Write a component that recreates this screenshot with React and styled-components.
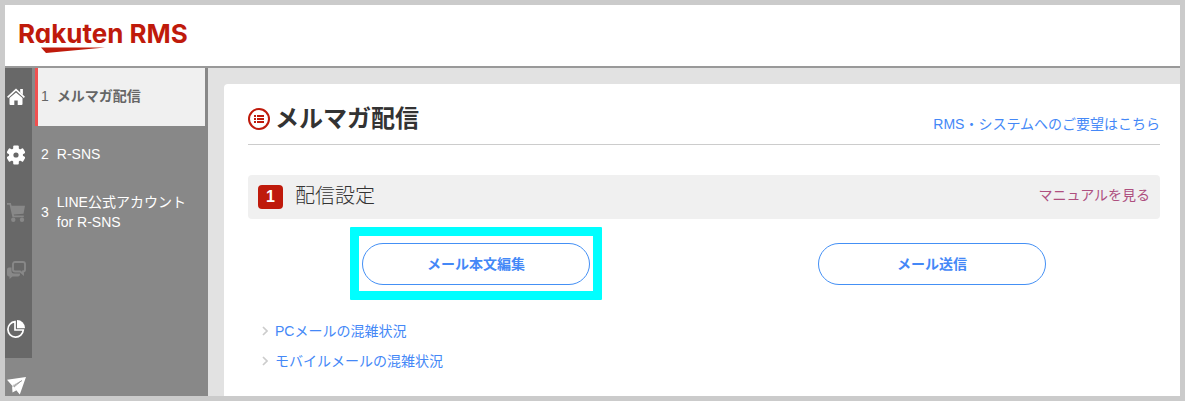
import styled, { createGlobalStyle, css } from 'styled-components';

const GlobalStyle = createGlobalStyle`
  *, *::before, *::after {
    box-sizing: border-box;
  }

  body {
    margin: 0;
    font-family: "Liberation Sans", "Noto Sans CJK JP", sans-serif;
    font-size: 14px;
    line-height: 20px;
    color: #333;
  }

  a {
    color: #4488f7;
    text-decoration: none;
  }
`;

const Frame = styled.div`
  display: flex;
  flex-direction: column;
  height: 100vh;
  border: 5px solid #cbcbcb;
  background: #e2e2e2;
  overflow: hidden;
`;

const Header = styled.header`
  flex: none;
  height: 63px;
  padding: 15px 13px 0;
  background: #fff;
  border-bottom: 2px solid #999;
`;

const Logo = styled.a`
  display: flex;
  flex-direction: column;
  width: max-content;
  color: #bf1a0b;

  svg {
    display: block;
    margin-left: 23px;
  }
`;

const LogoText = styled.span`
  font-family: Inter, sans-serif;
  font-size: 26px;
  font-weight: 700;
  line-height: 27px;
  font-feature-settings: "cv11";
`;

const Body = styled.div`
  display: flex;
  flex: 1;
  min-height: 0;
`;

const Rail = styled.nav`
  flex: none;
  width: 27px;
  background: #888;
`;

const RailButton = styled.button`
  display: flex;
  align-items: center;
  width: 100%;
  height: 58px;
  padding: 0 2px;
  border: 0;
  background: ${({ $plain }) => ($plain ? 'transparent' : '#686868')};
  color: ${({ $muted }) => ($muted ? '#888' : '#fff')};

  svg {
    flex: none;
    display: block;
  }
`;

const SideMenu = styled.nav`
  flex: none;
  width: 176px;
  padding: 0 3px;
  background: #888;
`;

const SideItem = styled.a`
  display: flex;
  align-items: center;
  gap: 8px;
  height: 58px;
  padding: 0 0 2px 3px;
  border-left: 3px solid transparent;
  color: #fff;

  ${({ $active }) =>
    $active &&
    css`
      border-left-color: #f05050;
      background: #f0f0f0;
      color: #666;

      span:last-child {
        font-weight: 700;
      }
    `}
`;

const Main = styled.main`
  flex: 1;
  display: flex;
  min-width: 0;
  padding: 16px 0 0 16px;
`;

const Panel = styled.div`
  flex: 1;
  padding: 16px 20px 0 24px;
  border-top-left-radius: 4px;
  background: #fff;
`;

const TitleRow = styled.div`
  display: flex;
  align-items: center;
  justify-content: space-between;
  height: 45px;
  border-bottom: 1px solid #ccc;
`;

const Title = styled.h1`
  display: flex;
  align-items: center;
  gap: 5px;
  margin: 0 0 6px;
  font-size: 24px;
  font-weight: 700;
  line-height: 36px;
`;

const RequestLink = styled.a`
  padding-top: 4px;
`;

const SectionBar = styled.div`
  display: flex;
  align-items: center;
  height: 44px;
  margin-top: 30px;
  padding: 0 10px;
  border-radius: 4px;
  background: #f0f0f0;
`;

const StepBadge = styled.span`
  width: 25px;
  height: 24px;
  border-radius: 4px;
  background: #bf1a0b;
  color: #fff;
  font-size: 16px;
  font-weight: 700;
  line-height: 24px;
  text-align: center;
`;

const SectionTitle = styled.h2`
  flex: 1;
  margin: 0 0 2px 12px;
  font-size: 20px;
  font-weight: 300;
  line-height: 40px;
`;

const ManualLink = styled.a`
  padding-bottom: 4px;
  color: #ae4f7f;
`;

const Actions = styled.div`
  display: grid;
  grid-template-columns: 1fr 1fr;
  padding-top: 24px;
`;

const PillButton = styled.button`
  justify-self: center;
  width: 50%;
  height: 42px;
  border: 1px solid #4490f5;
  border-radius: 21px;
  background: #fff;
  color: #4488f7;
  font: inherit;
  font-weight: 700;
`;

/* square-cornered marker drawn around a button */
const Marker = styled.div`
  justify-self: center;
  display: grid;
  width: calc(50% + 24px);
  margin: -16px 0 -15px;
  padding: 7px 3px 6px;
  border: 9px solid #00ffff;
  border-radius: 1px;

  ${PillButton} {
    width: 100%;
  }
`;

const LinkList = styled.ul`
  margin: 31px 0 0;
  padding: 0 0 0 14px;
  list-style: none;
`;

const LinkItem = styled.li`
  display: flex;
  align-items: center;
  gap: 7px;
  height: 30px;
`;

const HomeIcon = () => (
  <svg width="18" height="19" viewBox="0 0 18 19" fill="currentColor" aria-hidden="true">
    <path d="M9 4.500 2.500 10V16a1 1 0 0 0 1 1H7.300v-4.400h3.400V17h3.800a1 1 0 0 0 1-1V10Z" />
    <path d="M.6 9.300 9 1.600l8.400 7.700" fill="none" stroke="currentColor" strokeWidth="1.700" />
    <path d="M13.200 1h2.700V7l-2.700-2.400Z" />
  </svg>
);

const GearIcon = () => (
  <svg width="18" height="20" viewBox="0 0 18 20" aria-hidden="true">
    <g fill="currentColor">
      <circle cx="9" cy="10" r="7" />
      {[0, 60, 120].map((angle) => (
        <rect key={angle} x="6.200" y=".6" width="5.600" height="18.800" rx="1" transform={`rotate(${angle} 9 10)`} />
      ))}
    </g>
    <circle cx="9" cy="10" r="2.600" fill="#686868" />
  </svg>
);

const CartIcon = () => (
  <svg width="18" height="20" viewBox="0 0 18 20" fill="currentColor" aria-hidden="true">
    <path d="M0 0h3.800l.8 2.800H18l-1.500 8-9.700.8.3.9h9.700v1.700H5.500L2.600 1.700H0Z" />
    <circle cx="6.300" cy="16.700" r="2.200" />
    <circle cx="15" cy="16.700" r="2.200" />
  </svg>
);

const ChatIcon = () => (
  <svg width="19" height="20" viewBox="0 0 19 20" aria-hidden="true">
    <path d="M4.500 6.500H2a2 2 0 0 0-2 2v5a2 2 0 0 0 2 2h.5V18l3-2.500H11a2 2 0 0 0 2-2v-1H7a2.500 2.500 0 0 1-2.500-2.500Z" fill="currentColor" />
    <path d="M8 1h8a2 2 0 0 1 2 2v5.500a2 2 0 0 1-2 2v2.500l-2.800-2.500H8a2 2 0 0 1-2-2V3a2 2 0 0 1 2-2Z" fill="none" stroke="currentColor" strokeWidth="1.900" />
  </svg>
);

const PieIcon = () => (
  <svg width="19" height="18" viewBox="0 0 19 18" aria-hidden="true">
    <path d="M8 1.700A7.700 7.700 0 1 0 16.300 10H8Z" fill="none" stroke="currentColor" strokeWidth="1.700" />
    <path d="M10 0a8 8 0 0 1 8 8.300h-8Z" fill="currentColor" />
  </svg>
);

const PlaneIcon = () => (
  <svg width="19" height="20" viewBox="0 0 19 20" fill="currentColor" aria-hidden="true">
    <path d="M19 0 0 2.800 5 8.500 15 3.500 7 10.500 12.800 17.500Z" />
    <path d="M5 8.500 15 3.300 6.800 9.800 9.500 13.300 5.500 15.500Z" />
    <path d="M5.500 9.600 15 3.500" stroke="#888" strokeWidth=".8" />
  </svg>
);

const ListIcon = () => (
  <svg width="22" height="22" viewBox="0 0 22 22" fill="#bf1a0b" aria-hidden="true">
    <circle cx="11" cy="11" r="10" fill="none" stroke="#bf1a0b" strokeWidth="2" />
    {[7, 10, 13].map((y) => (
      <g key={y}>
        <rect x="6" y={y} width="2" height="2" />
        <rect x="9" y={y} width="7" height="2" />
      </g>
    ))}
  </svg>
);

const Chevron = () => (
  <svg width="6" height="10" viewBox="0 0 6 10" aria-hidden="true">
    <path d="m1 1 4 4-4 4" fill="none" stroke="#ccc" strokeWidth="1.700" />
  </svg>
);

const railItems = [
  { name: 'ホーム', Icon: HomeIcon },
  { name: '設定', Icon: GearIcon },
  { name: 'カート', Icon: CartIcon, muted: true },
  { name: 'チャット', Icon: ChatIcon, muted: true },
  { name: 'データ分析', Icon: PieIcon },
  { name: '配信', Icon: PlaneIcon, plain: true },
];

const menuItems = [
  { label: 'メルマガ配信', active: true },
  { label: 'R-SNS' },
  { label: 'LINE公式アカウント for R-SNS' },
];

const statusLinks = ['PCメールの混雑状況', 'モバイルメールの混雑状況'];

export default function App() {
  return (
    <>
      <GlobalStyle />
      <Frame>
        <Header>
          <Logo href="#">
            <LogoText>Rakuten RMS</LogoText>
            <svg width="64" height="6" viewBox="0 0 64 6" aria-hidden="true">
              <path d="M0 0.500H64L5 6Z" fill="currentColor" />
            </svg>
          </Logo>
        </Header>
        <Body>
          <Rail>
            {railItems.map(({ name, Icon, muted, plain }) => (
              <RailButton key={name} type="button" aria-label={name} $muted={muted} $plain={plain}>
                <Icon />
              </RailButton>
            ))}
          </Rail>
          <SideMenu>
            {menuItems.map(({ label, active }, idx) => (
              <SideItem key={label} href="#" $active={active}>
                <span>{idx + 1}</span>
                <span>{label}</span>
              </SideItem>
            ))}
          </SideMenu>
          <Main>
            <Panel>
              <TitleRow>
                <Title>
                  <ListIcon />
                  メルマガ配信
                </Title>
                <RequestLink href="#">RMS・システムへのご要望はこちら</RequestLink>
              </TitleRow>
              <SectionBar>
                <StepBadge>1</StepBadge>
                <SectionTitle>配信設定</SectionTitle>
                <ManualLink href="#">マニュアルを見る</ManualLink>
              </SectionBar>
              <Actions>
                <Marker>
                  <PillButton type="button">メール本文編集</PillButton>
                </Marker>
                <PillButton type="button">メール送信</PillButton>
              </Actions>
              <LinkList>
                {statusLinks.map((label) => (
                  <LinkItem key={label}>
                    <Chevron />
                    <a href="#">{label}</a>
                  </LinkItem>
                ))}
              </LinkList>
            </Panel>
          </Main>
        </Body>
      </Frame>
    </>
  );
}
